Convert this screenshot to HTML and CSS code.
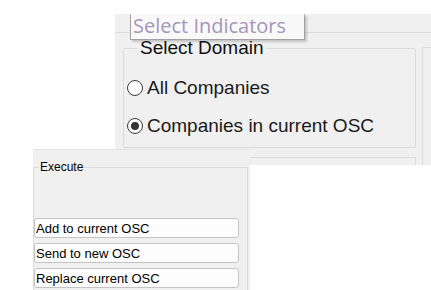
FILE: index.html
```html
<!DOCTYPE html>
<html>
<head>
<meta charset="utf-8">
<link rel="stylesheet" href="styles.css">
</head>
<body>
<div class="stage">
  <div class="top">
    <div class="strip"></div>
    <div class="cols">
      <div class="main">
        <fieldset class="domain">
          <legend>Select Domain</legend>
          <div class="radios">
            <label class="radio"><span class="circle"></span>All Companies</label>
            <label class="radio"><span class="circle on"></span>Companies in current OSC</label>
          </div>
        </fieldset>
        <div class="nextbox"></div>
      </div>
      <div class="sidebox"></div>
    </div>
    <div class="tip">Select Indicators</div>
  </div>
  <div class="bottom">
    <div class="band"></div>
    <fieldset class="exec">
      <legend>Execute</legend>
      <div class="buttons">
        <button class="btn">Add to current OSC</button>
        <button class="btn">Send to new OSC</button>
        <button class="btn">Replace current OSC</button>
      </div>
    </fieldset>
  </div>
</div>
</body>
</html>
```
FILE: styles.css
```css
html, body {
  margin: 0;
  padding: 0;
  background: #ffffff;
  overflow: hidden;
}
body {
  font-family: "Liberation Sans", Arial, sans-serif;
  color: #000;
}
.stage {
  width: 431px;
  height: 290px;
  overflow: hidden;
}
.top {
  position: relative;
  margin-left: 115px;
  margin-top: 14px;
  width: 316px;
  height: 151px;
  background: #f0f0f0;
}
.strip {
  height: 18px;
  border-bottom: 1px solid #dcdcdc;
}
.cols {
  display: flex;
  padding-left: 8px;
}
.main {
  width: 293px;
  flex: none;
}
.domain {
  box-sizing: border-box;
  margin: 4px 0 0 0;
  padding: 0;
  height: 111px;
  border: 1px solid #dcdcdc;
  border-radius: 2px;
  min-width: 0;
}
.domain legend {
  margin-left: 14px;
  padding: 0 2px;
  font-size: 19px;
  line-height: 22px;
  color: #111;
}
.radios {
  display: flex;
  flex-direction: column;
  gap: 14px;
  padding-top: 17px;
  padding-left: 3px;
}
.radio {
  display: flex;
  align-items: center;
  gap: 4px;
  height: 24px;
  font-size: 19px;
  color: #1a1a1a;
}
.circle {
  box-sizing: border-box;
  width: 16px;
  height: 16px;
  border: 1px solid #3a3a3a;
  border-radius: 50%;
  background: #fff;
  display: flex;
  align-items: center;
  justify-content: center;
}
.circle.on::after {
  content: "";
  width: 8px;
  height: 8px;
  border-radius: 50%;
  background: #333;
}
.nextbox {
  margin-top: 9px;
  height: 7px;
  border: 1px solid #dcdcdc;
  border-bottom: none;
}
.sidebox {
  margin-left: 6px;
  margin-top: 14px;
  width: 20px;
  height: 117px;
  border: 1px solid #dcdcdc;
  border-right: none;
  border-bottom: none;
}
.tip {
  position: absolute;
  left: 15px;
  top: 0;
  box-sizing: border-box;
  width: 175px;
  height: 26px;
  padding-left: 2px;
  background: #f9f9f9;
  border: 1px solid #a0a0a0;
  border-top-color: transparent;
  box-shadow: 2px 2px 2px rgba(0, 0, 0, 0.18);
  font-family: "Open Sans", "Noto Sans", sans-serif;
  font-size: 20px;
  line-height: 22px;
  color: #a596ba;
  white-space: nowrap;
}
.bottom {
  position: relative;
  margin-left: 33px;
  margin-top: -16px;
  width: 217px;
  height: 145px;
  background: #f0f0f0;
  border-top: 1px solid #e4e4e4;
  overflow: hidden;
}
.band {
  height: 10px;
}
.exec {
  margin: 0;
  padding: 0;
  width: 215px;
  box-sizing: border-box;
  height: 200px;
  border: 1px solid #dcdcdc;
  min-width: 0;
}
.exec legend {
  margin-left: 5px;
  padding: 0 1px;
  font-size: 12px;
  line-height: 14px;
}
.buttons {
  display: flex;
  flex-direction: column;
  gap: 5px;
  padding-top: 44px;
}
.btn {
  box-sizing: border-box;
  width: 205px;
  height: 20px;
  margin: 0;
  padding: 0 0 0 1px;
  text-align: left;
  font-family: "Liberation Sans", Arial, sans-serif;
  font-size: 13px;
  color: #000;
  background: #fdfdfd;
  border: 1px solid #c4c4c4;
  border-radius: 3px;
}
```
